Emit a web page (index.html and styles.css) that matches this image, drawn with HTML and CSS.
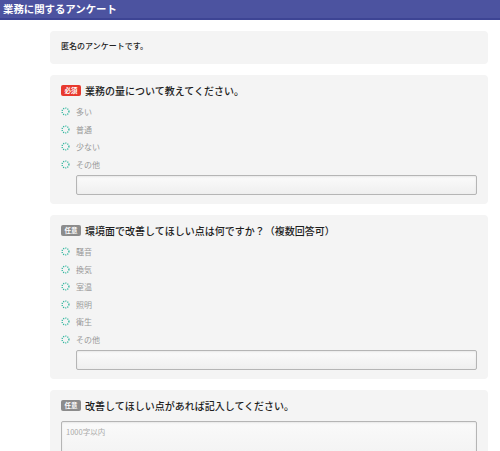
FILE: index.html
```html
<!DOCTYPE html>
<html lang="ja">
<head>
<meta charset="utf-8">
<link rel="stylesheet" href="styles.css">
</head>
<body>
<header class="topbar">業務に関するアンケート</header>
<main class="wrap">
  <section class="card intro">匿名のアンケートです。</section>

  <section class="card">
    <div class="q-title"><span class="badge req">必須</span>業務の量について教えてください。</div>
    <ul class="options">
      <li><svg class="radio" viewBox="0 0 9 9"><circle cx="4.5" cy="4.5" r="3.4"/></svg>多い</li>
      <li><svg class="radio" viewBox="0 0 9 9"><circle cx="4.5" cy="4.5" r="3.4"/></svg>普通</li>
      <li><svg class="radio" viewBox="0 0 9 9"><circle cx="4.5" cy="4.5" r="3.4"/></svg>少ない</li>
      <li><svg class="radio" viewBox="0 0 9 9"><circle cx="4.5" cy="4.5" r="3.4"/></svg>その他</li>
    </ul>
    <div class="other-input"></div>
  </section>

  <section class="card">
    <div class="q-title"><span class="badge opt">任意</span>環境面で改善してほしい点は何ですか？（複数回答可）</div>
    <ul class="options">
      <li><svg class="radio" viewBox="0 0 9 9"><circle cx="4.5" cy="4.5" r="3.4"/></svg>騒音</li>
      <li><svg class="radio" viewBox="0 0 9 9"><circle cx="4.5" cy="4.5" r="3.4"/></svg>換気</li>
      <li><svg class="radio" viewBox="0 0 9 9"><circle cx="4.5" cy="4.5" r="3.4"/></svg>室温</li>
      <li><svg class="radio" viewBox="0 0 9 9"><circle cx="4.5" cy="4.5" r="3.4"/></svg>照明</li>
      <li><svg class="radio" viewBox="0 0 9 9"><circle cx="4.5" cy="4.5" r="3.4"/></svg>衛生</li>
      <li><svg class="radio" viewBox="0 0 9 9"><circle cx="4.5" cy="4.5" r="3.4"/></svg>その他</li>
    </ul>
    <div class="other-input"></div>
  </section>

  <section class="card">
    <div class="q-title"><span class="badge opt">任意</span>改善してほしい点があれば記入してください。</div>
    <div class="textarea">1000字以内</div>
  </section>
</main>
</body>
</html>
```

FILE: styles.css
```css
* { box-sizing: border-box; }
html, body { margin: 0; padding: 0; background: #fff; }
body {
  font-family: "Noto Sans CJK JP", "Noto Sans", sans-serif;
  color: #222;
  overflow: hidden;
  height: 451px;
}
.topbar {
  height: 20px;
  background: #4c53a0;
  border-bottom: 2px solid #3d4494;
  color: #fff;
  font-weight: bold;
  font-size: 10.4px;
  line-height: 18px;
  padding-left: 3px;
}
.wrap {
  margin: 11px 0 0 50px;
  width: 438px;
  display: flex;
  flex-direction: column;
  gap: 11px;
}
.card {
  background: #f4f4f4;
  border-radius: 4px;
  padding: 8px 11px 9px 11px;
}
.card.intro {
  padding: 6px 11px 10px 11px;
  font-size: 8px;
  line-height: 17px;
  color: #222;
  font-weight: 500;
}
.q-title {
  display: flex;
  align-items: center;
  height: 14px;
  font-size: 10px;
  color: #1e1e1e;
  font-weight: 500;
}
.badge {
  display: inline-flex;
  align-items: center;
  justify-content: center;
  width: 20px;
  height: 11px;
  border-radius: 2px;
  color: #fff;
  font-size: 6.5px;
  font-weight: bold;
  margin-right: 4px;
}
.badge.req { background: #e8392e; }
.badge.opt { background: #8c8c8c; }
.options {
  list-style: none;
  margin: 6px 0 0 0;
  padding: 0;
}
.options li {
  display: flex;
  align-items: center;
  height: 17.5px;
  font-size: 8px;
  color: #999;
}
.radio {
  width: 9px;
  height: 9px;
  margin-right: 6px;
  flex: none;
  fill: none;
  stroke: #2bb49c;
  stroke-width: 1.3;
  stroke-dasharray: 1.1 1.1;
}
.other-input {
  margin: 2px 0 0 15px;
  height: 20px;
  border: 1px solid #b5b5b5;
  border-radius: 2px;
  background: linear-gradient(#fbfbfb, #efefef);
  box-shadow: inset 0 1px 2px rgba(0,0,0,0.08);
}
.textarea {
  margin-top: 9px;
  height: 60px;
  border: 1px solid #b5b5b5;
  border-radius: 2px;
  background: linear-gradient(#fafafa, #eeeeee);
  box-shadow: inset 0 1px 2px rgba(0,0,0,0.08);
  font-size: 7.5px;
  color: #aaa;
  padding: 5px 4px;
  line-height: 10px;
}
```
